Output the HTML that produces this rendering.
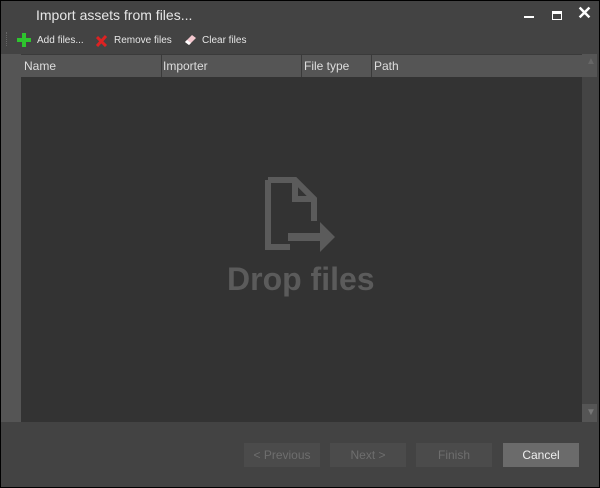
<!DOCTYPE html>
<html><head><style>
body{margin:0;width:600px;height:488px;overflow:hidden;background:#000;font-family:"Liberation Sans",sans-serif;}
#w{position:absolute;left:1px;top:1px;width:598px;height:486px;background:#434343;}
.t{position:absolute;color:#e6e6e6;}
.btn{position:absolute;top:443px;width:76px;height:24px;background:#4b4b4b;color:#6e6e6e;font-size:12px;text-align:center;line-height:24px;}
</style></head><body>
<div id="w"></div>
<div class="t" style="left:36px;top:7px;font-size:14px;">Import assets from files...</div>
<div style="position:absolute;left:524px;top:16px;width:10px;height:2px;background:#fff"></div>
<div style="position:absolute;left:552px;top:11px;width:8px;height:5px;border:1px solid #fff;border-top-width:3px"></div>
<div class="t" style="left:577px;top:3px;font-size:18px;font-weight:bold;color:#fff">✕</div>
<div style="position:absolute;left:6px;top:32px;width:1px;height:14px;border-left:1px dotted #666"></div>
<svg style="position:absolute;left:17px;top:33px" width="14" height="14"><path d="M5 0h4v5h5v4H9v5H5V9H0V5h5z" fill="#2ec42e"/></svg>
<div class="t" style="left:37px;top:35px;font-size:10px;">Add files...</div>
<svg style="position:absolute;left:96px;top:35px" width="12" height="12"><path d="M1 2L10 11M10 1L1 11" stroke="#d22" stroke-width="3"/></svg>
<div class="t" style="left:114px;top:35px;font-size:10px;">Remove files</div>
<svg style="position:absolute;left:183px;top:33px" width="14" height="14"><path d="M2 9L9 2l4 3-7 7z" fill="#f4c8cf"/><path d="M2 9l4 3 2-2-4-3z" fill="#fff"/></svg>
<div class="t" style="left:202px;top:35px;font-size:10px;">Clear files</div>
<div style="position:absolute;left:1px;top:54px;width:20px;height:368px;background:#555"></div>
<div style="position:absolute;left:21px;top:54px;width:561px;height:368px;background:#333"></div>
<div style="position:absolute;left:21px;top:54px;width:561px;height:23px;background:#555;border-top:1px solid #3a3a3a;box-sizing:border-box"></div>
<div style="position:absolute;left:582px;top:54px;width:15px;height:368px;background:#444"></div>
<div style="position:absolute;left:582px;top:54px;width:15px;height:23px;background:#555"></div>
<div style="position:absolute;left:582px;top:404px;width:15px;height:18px;background:#555"></div>
<div class="t" style="left:586px;top:56px;font-size:10px;color:#666">▲</div>
<div class="t" style="left:586px;top:407px;font-size:10px;color:#777">▼</div>
<div style="position:absolute;left:161px;top:55px;width:1px;height:22px;background:#3a3a3a"></div>
<div style="position:absolute;left:301px;top:55px;width:1px;height:22px;background:#3a3a3a"></div>
<div style="position:absolute;left:371px;top:55px;width:1px;height:22px;background:#3a3a3a"></div>
<div class="t" style="left:24px;top:59px;font-size:12px;color:#ddd">Name</div>
<div class="t" style="left:163px;top:59px;font-size:12px;color:#ddd">Importer</div>
<div class="t" style="left:304px;top:59px;font-size:12px;color:#ddd">File type</div>
<div class="t" style="left:374px;top:59px;font-size:12px;color:#ddd">Path</div>
<svg style="position:absolute;left:262px;top:174px" width="80" height="84"><path d="M6 6h27l19 19v22M6 6v67h22M33 6v19h19" fill="none" stroke="#5b5b5b" stroke-width="6"/><path d="M26 59h32v-11l15 15-15 15v-11H26z" fill="#5b5b5b"/></svg>
<div class="t" style="left:227px;top:261px;font-size:32px;font-weight:bold;color:#5b5b5b">Drop files</div>
<div class="btn" style="left:244px">&lt; Previous</div>
<div class="btn" style="left:330px">Next &gt;</div>
<div class="btn" style="left:416px">Finish</div>
<div class="btn" style="left:503px;background:#6b6b6b;color:#eee">Cancel</div>
</body></html>
